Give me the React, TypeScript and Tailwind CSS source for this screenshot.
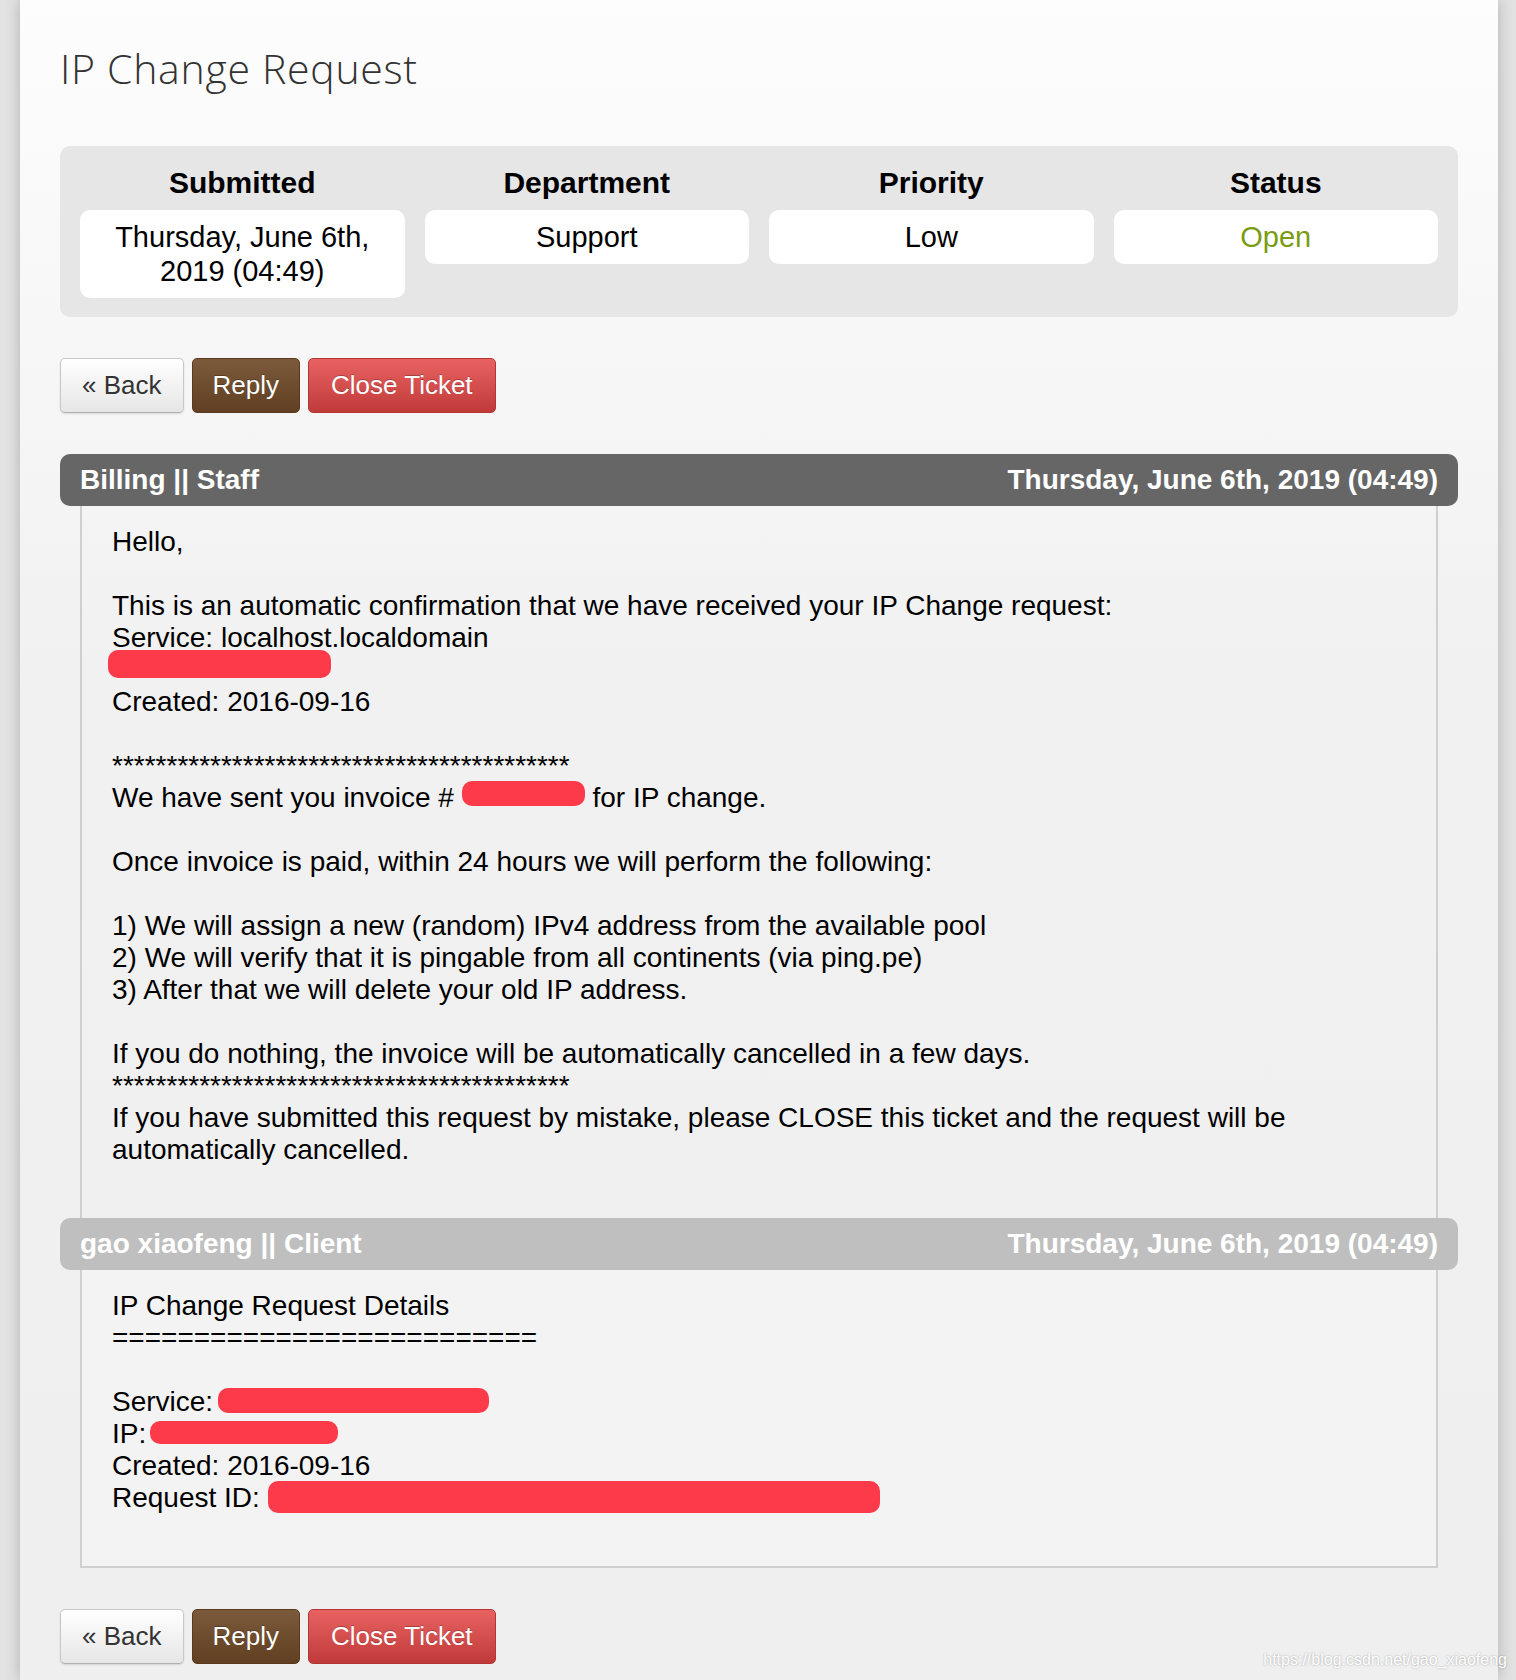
import type { ReactNode } from "react";

const stars = "*".repeat(42);
const equals = "=".repeat(26);

function Redacted({ w, h, align, className = "" }: { w: string; h: string; align: string; className?: string }) {
  // a red marker stroke hiding private data; negative top margin keeps the line box at 32px
  return <span className={`-mt-[8px] inline-block rounded-[10px] bg-[#fd3a4a] ${w} ${h} ${align} ${className}`} />;
}

function Buttons() {
  return (
    <div className="flex gap-2">
      <button className="rounded-[5px] border border-[#c8c8c8] border-b-[#b0b0b0] bg-linear-to-b from-white to-[#e6e6e6] px-[21px] py-[9px] text-[26px] leading-[35px] text-[#333] shadow-[0_1px_2px_rgba(0,0,0,0.12)]">
        « Back
      </button>
      <button className="rounded-[5px] border border-[#5a391f] bg-linear-to-b from-[#7c5b3c] to-[#603f22] px-[20px] py-[9px] text-[26px] leading-[35px] text-white [text-shadow:0_-1px_0_rgba(0,0,0,0.25)]">
        Reply
      </button>
      <button className="rounded-[5px] border border-[#b53535] bg-linear-to-b from-[#e96262] to-[#c03a3a] px-[22px] py-[9px] text-[26px] leading-[35px] text-white [text-shadow:0_-1px_0_rgba(0,0,0,0.25)]">
        Close Ticket
      </button>
    </div>
  );
}

function MessageBar({ who, date, tone }: { who: string; date: string; tone: string }) {
  return (
    <div className={`flex h-[52px] items-center justify-between rounded-[10px] px-5 text-[28px] font-bold text-white ${tone}`}>
      <span>{who}</span>
      <span>{date}</span>
    </div>
  );
}

function Info({ label, children }: { label: string; children: ReactNode }) {
  return (
    <div className="flex flex-col">
      <div className="text-center text-[30px] font-bold leading-[34px] text-black">{label}</div>
      <div className="mt-[10px] rounded-[10px] bg-white py-[10px] text-center text-[29px] leading-[34px] text-black">
        {children}
      </div>
    </div>
  );
}

export default function App() {
  const date = "Thursday, June 6th, 2019 (04:49)";
  return (
    <div className="relative min-h-[1680px] bg-[#e2e2e2] pl-[20px] pr-[18px] font-['Liberation_Sans',Arial,sans-serif]">
      <div className="min-h-[1680px] bg-linear-to-b from-[#fdfdfd] via-[#f1f1f1] via-40% to-[#efefef] px-10 pt-[48px] shadow-[0_0_14px_rgba(0,0,0,0.22)]">
        <h1 className="font-['Open_Sans',sans-serif] text-[41px] font-light leading-[40px] tracking-[0.7px] text-[#333]">
          IP Change Request
        </h1>

        <div className="mt-[58px] grid grid-cols-4 items-start gap-x-5 rounded-[10px] bg-[#e6e6e6] px-5 pb-[19px] pt-5">
          <Info label="Submitted">
            Thursday, June 6th,
            <br />
            2019 (04:49)
          </Info>
          <Info label="Department">Support</Info>
          <Info label="Priority">Low</Info>
          <Info label="Status">
            <span className="text-[#7a9c12]">Open</span>
          </Info>
        </div>

        <div className="mt-[41px]">
          <Buttons />
        </div>

        <div className="mt-[41px]">
          <MessageBar who="Billing || Staff" date={date} tone="bg-[#666666]" />
          <div className="mx-5 border-x-2 border-[#cfcfcf] pb-[52px] pl-[30px] pr-5 pt-5 text-[28px] leading-[32px] text-black">
            Hello,
            <br />
            <br />
            This is an automatic confirmation that we have received your IP Change request:
            <br />
            Service: localhost.localdomain
            <br />
            <Redacted w="w-[223px]" h="h-[28px]" align="align-[1px]" className="-ml-1" />
            <br />
            Created: 2016-09-16
            <br />
            <br />
            {stars}
            <br />
            We have sent you invoice # <Redacted w="w-[123px]" h="h-[25px]" align="align-[1px]" /> for IP change.
            <br />
            <br />
            Once invoice is paid, within 24 hours we will perform the following:
            <br />
            <br />
            1) We will assign a new (random) IPv4 address from the available pool
            <br />
            2) We will verify that it is pingable from all continents (via ping.pe)
            <br />
            3) After that we will delete your old IP address.
            <br />
            <br />
            If you do nothing, the invoice will be automatically cancelled in a few days.
            <br />
            {stars}
            <br />
            If you have submitted this request by mistake, please CLOSE this ticket and the request will be
            <br />
            automatically cancelled.
          </div>

          <MessageBar who="gao xiaofeng || Client" date={date} tone="bg-[#bfbfbf]" />
          <div className="mx-5 border-x-2 border-b-2 border-[#cfcfcf] bg-[#f3f3f3] pb-[52px] pl-[30px] pr-5 pt-5 text-[28px] leading-[32px] text-black">
            IP Change Request Details
            <br />
            {equals}
            <br />
            <br />
            Service:<Redacted w="w-[271px]" h="h-[25px]" align="align-[-2px]" className="ml-[5px]" />
            <br />
            IP:<Redacted w="w-[188px]" h="h-[23px]" align="align-[-1px]" className="ml-[4px]" />
            <br />
            Created: 2016-09-16
            <br />
            Request ID: <Redacted w="w-[612px]" h="h-[32px]" align="align-[-6px]" />
          </div>
        </div>

        <div className="mt-[41px]">
          <Buttons />
        </div>
      </div>

      <span className="absolute bottom-[8px] right-[9px] text-[16px] text-white [text-shadow:0_0_2px_rgba(0,0,0,0.35)]">
        https://blog.csdn.net/gao_xiaofeng
      </span>
    </div>
  );
}
